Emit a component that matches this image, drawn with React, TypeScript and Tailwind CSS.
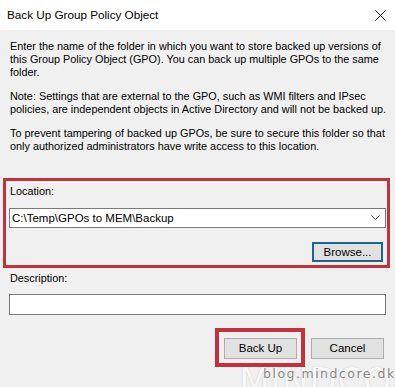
export default function App() {
  const body = { fontFamily: '"Liberation Sans", Arial, sans-serif' };
  return (
    <div className="w-[395px] h-[387px] flex flex-col overflow-hidden relative bg-[#f0f0f0] text-black" style={body}>
      {/* title bar */}
      <div className="h-[30px] bg-white flex items-center justify-between pl-[7px] pr-[9px] shrink-0">
        <span className="text-[11.7px]">Back Up Group Policy Object</span>
        <svg width="11" height="11" viewBox="0 0 11 11" className="mt-[1px]">
          <path d="M0.5 0.5 L10.5 10.5 M10.5 0.5 L0.5 10.5" stroke="#111" strokeWidth="1" />
        </svg>
      </div>

      <div className="flex flex-col pt-[10px] text-[10.85px] leading-[13px]">
        <p className="mx-[10px] whitespace-nowrap">
          Enter the name of the folder in which you want to store backed up versions of
          <br />
          this Group Policy Object (GPO). You can back up multiple GPOs to the same
          <br />
          folder.
        </p>
        <p className="mx-[10px] mt-[11px] whitespace-nowrap">
          Note: Settings that are external to the GPO, such as WMI filters and IPsec
          <br />
          policies, are independent objects in Active Directory and will not be backed up.
        </p>
        <p className="mx-[10px] mt-[11px] whitespace-nowrap">
          To prevent tampering of backed up GPOs, be sure to secure this folder so that
          <br />
          only authorized administrators have write access to this location.
        </p>

        <div className="mt-[25px] ml-[3px] w-[387px] h-[90px] border-[3px] border-[#c4313d] flex flex-col">
          <div className="pt-[4px] pl-[4px]">Location:</div>
          <div className="mt-[10px] ml-[3px] w-[377px] h-[20px] bg-white border border-[#7a7a7a] flex items-center justify-between pl-[2px] pr-[5px] text-[11.5px]">
            <span>C:\Temp\GPOs to MEM\Backup</span>
            <svg width="9" height="6" viewBox="0 0 9 6">
              <path d="M0.5 0.5 L4.5 4.5 L8.5 0.5" fill="none" stroke="#444" strokeWidth="1" />
            </svg>
          </div>
          <div className="mt-[14px] self-end mr-[4px] w-[71px] h-[20px] bg-[#e1e1e1] border-2 border-[#1f6391] flex items-center justify-center text-[11.5px]">
            Browse...
          </div>
        </div>

        <div className="mt-[4px] pl-[10px]">Description:</div>
        <div className="mt-[9px] ml-[9px] w-[377px] h-[21px] bg-white border border-[#7a7a7a]" />

        <div className="mt-[23px] flex justify-end gap-[14px] pr-[11px]">
          <div className="relative w-[73px] h-[21px] bg-[#e1e1e1] border border-[#adadad] flex items-center justify-center text-[11.5px]">
            Back Up
            <div className="absolute left-[-10px] top-[-11px] w-[90px] h-[39px] border-[4px] border-[#c4313d]" />
          </div>
          <div className="w-[73px] h-[21px] bg-[#e1e1e1] border border-[#adadad] flex items-center justify-center text-[11.5px]">
            Cancel
          </div>
        </div>
      </div>

      {/* watermark */}
      <div
        className="absolute left-[239px] top-[363px] text-[36px] leading-none tracking-[0.5px] text-white/90 select-none whitespace-nowrap"
        style={{ fontFamily: '"DejaVu Sans", sans-serif', textShadow: "0 0 1px rgba(0,0,0,0.25)" }}
      >
        MINDCORE
      </div>
      <div
        className="absolute left-[263px] top-[368px] text-[12.5px] leading-none tracking-[1.5px] text-[#5a5a5a]/70 select-none whitespace-nowrap"
        style={{ fontFamily: '"DejaVu Sans", sans-serif' }}
      >
        blog.mindcore.dk
      </div>
    </div>
  );
}
